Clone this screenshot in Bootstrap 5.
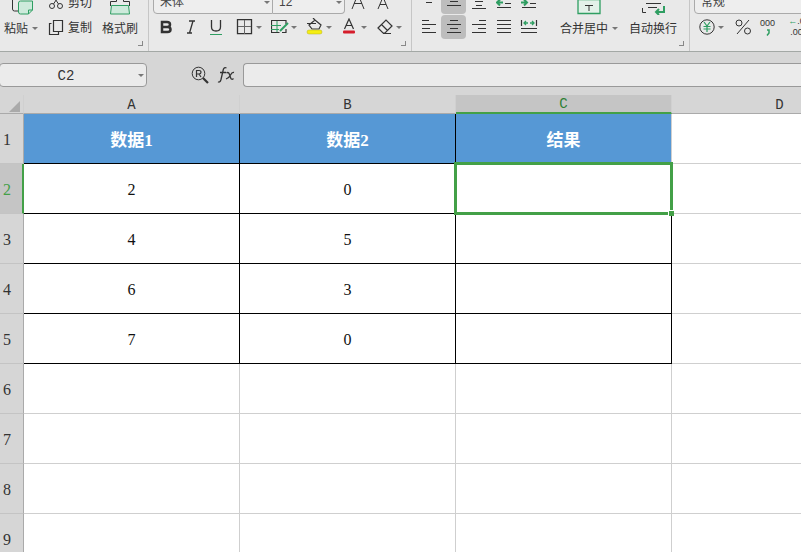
<!DOCTYPE html>
<html lang="zh-CN">
<head>
<meta charset="utf-8">
<meta name="viewport" content="width=device-width, initial-scale=1">
<title>Spreadsheet</title>
<link href="https://cdn.jsdelivr.net/npm/bootstrap@5.3.0/dist/css/bootstrap.min.css" rel="stylesheet">
<style>
  body { background: #fff; color: #333; font-family: "Liberation Sans", "Noto Sans CJK SC", sans-serif; font-size: 12px; line-height: 16px; }
  svg { display: block; flex: none; fill: none; stroke: #333; }
  .app { height: 100vh; }
  .ribbon { height: 51px; background: #e9e9e9; }
  .tool-group { border-right: 1px solid #c6c6c6; position: relative; padding-bottom: 12px; }
  .tool-group:last-child { border-right: 0; }
  .tool { border: 0; background: none; padding: 0; height: 24px; color: #333; font-size: 12px; line-height: 24px; display: flex; align-items: center; justify-content: center; white-space: nowrap; }
  .w25 { width: 25px; }
  .split { width: 35px; justify-content: flex-start; gap: 2px; }
  .stack { display: flex; flex-direction: column; align-items: center; }
  .stack .tool { height: auto; flex-direction: column; }
  .caption { height: 24px; display: flex; align-items: center; gap: 4px; padding-top: 3px; }
  .picture { height: 24px; display: flex; align-items: center; }
  .row-gap { gap: 1px; }
  .clipboard { gap: 10px; padding-right: 10px; }
  .clipboard .gap-1 { padding-top: 2px; }
  .wrap-tools { gap: 11px; }
  .caret { width: 0; height: 0; border: 3px solid transparent; border-top-color: #777; border-bottom: 0; flex: none; }
  .pressed { background: #bdbdbd; border-radius: 4px; }
  .corner { position: absolute; right: 5px; bottom: 5px; width: 5px; height: 5px; border: solid #888; border-width: 0 1px 1px 0; }
  .pick { appearance: none; border: 1px solid #aaa; background: #eee; height: 24px; color: #444; font-size: 12px; padding: 0 6px; }
  .pick-wrap { position: relative; }
  .pick-wrap .caret { position: absolute; right: 3px; top: 11px; }
  .font-pick { width: 120px; border-radius: 4px 0 0 4px; }
  .size-pick { width: 72px; border-left: 0; border-radius: 0 4px 4px 0; }
  .number-pick { width: 140px; border-radius: 4px; }
  .slim { width: 32px; }
  .digits { flex-direction: column; font: 9px/11px "Liberation Sans", sans-serif; }
  .digits .go { color: #2f9e62; font-weight: bold; }
  .formula-bar { height: 44px; background: #d6d6d6; border-top: 1px solid #a3a8a5; padding-top: 11px; }
  .finder { margin-left: 44px; }
  .field { height: 24px; border: 1px solid #999; background: #ebebeb; border-radius: 4px; font: 14px "Liberation Mono", monospace; color: #333; outline: 0; }
  .name-box { width: 148px; margin-left: -1px; text-align: center; padding: 1px 14px 0 0; }
  .sheet { table-layout: fixed; width: 888px; border-collapse: separate; border-spacing: 0; }
  .sheet th, .sheet td { padding: 0; text-align: center; vertical-align: middle; border: solid #cfcfcf; border-width: 0 1px 1px 0; }
  .sheet td, .sheet tbody th { height: 50px; padding-top: 2px; }
  .sheet td { color: #111; font: 16px "Liberation Serif", "Noto Sans CJK SC", serif; }
  .sheet thead th { height: 19px; background: #d6d6d6; border-color: #d0d0d0; border-bottom-color: #aaa; font: 14px/16px "Liberation Mono", monospace; color: #333; padding-top: 2px; }
  .sheet tbody th { background: #d6d6d6; border-color: #aaa; border-bottom-color: #c4c4c4; padding-right: 9px; font: 16px "Liberation Serif", serif; color: #333; }
  .sheet thead .active { background: #c5c5c5; color: #2f8035; border-bottom: 2px solid #43a047; line-height: 15px; }
  .sheet tbody .active { background: #c5c5c5; color: #43a047; border-right: 2px solid #43a047; padding-right: 8px; }
  .sheet .boxed { border-color: #000; }
  .sheet .title { background: #5698d5; color: #fff; font: bold 17px "Liberation Serif", "Noto Sans CJK SC", sans-serif; padding-top: 0; }
  .sheet .edge { border-right-color: #cfcfcf; }
  .selected { position: relative; }
  .selection { position: absolute; inset: -2px; border: 3px solid #43a047; z-index: 1; }
  .selection::after { content: ""; position: absolute; right: -4px; bottom: -4px; width: 6px; height: 6px; background: #43a047; border: solid #fff; border-width: 1px 0 0 1px; }
  .g { stroke: #2f9e62; }
</style>
</head>
<body>
<div class="app d-flex flex-column overflow-hidden">
  <header class="ribbon d-flex overflow-hidden flex-shrink-0">
    <div class="tool-group clipboard d-flex align-items-end flex-shrink-0 ps-1">
      <div class="stack">
        <button class="tool" type="button" aria-label="粘贴">
          <span class="picture"><svg width="26" height="24" viewBox="0 0 26 24"><path d="M4.500 0v18q0 2 2 2h4M19.500 0v9"/><path class="g" fill="#cdeadb" d="M10.500 12q0-2 2-2h12v9l-4 4h-8q-2 0-2-2z"/><path class="g" d="M20.500 23v-4h4"/></svg></span>
          <span class="caption">粘贴<i class="caret"></i></span>
        </button>
      </div>
      <div class="d-flex flex-column row-gap">
        <button class="tool gap-1" type="button"><svg width="16" height="16" viewBox="0 0 16 16"><circle cx="4" cy="11" r="2.500"/><circle cx="12" cy="11" r="2.500"/><path d="m5.500 9 6-9M10.500 9l-6-9"/></svg>剪切</button>
        <button class="tool gap-1" type="button"><svg width="16" height="16" viewBox="0 0 16 16"><path stroke-width="1.200" d="M5.500.5h9v11h-9zM3.500 3.500h-2v11h9V12"/></svg>复制</button>
      </div>
      <button class="tool stack h-auto" type="button">
        <span class="picture"><svg width="24" height="24" viewBox="0 0 24 24"><path d="M8.500 0v10.500h-6V15M15.500 0v10.500h6V15"/><path class="g" fill="#cdeadb" d="M3.500 14.500h17l1 8.500h-19z"/></svg></span>
        <span class="caption">格式刷</span>
      </button>
      <span class="corner"></span>
    </div>

    <div class="tool-group d-flex flex-column justify-content-end row-gap flex-shrink-0 ps-1">
      <div class="d-flex">
        <span class="pick-wrap"><select class="pick font-pick" aria-label="字体"><option>宋体</option></select><i class="caret"></i></span>
        <span class="pick-wrap"><select class="pick size-pick" aria-label="字号"><option>12</option></select><i class="caret"></i></span>
        <button class="tool w25" type="button" aria-label="增大字号"><svg width="14" height="16" viewBox="0 0 14 16"><path d="m1 15 6-15 6 15M3 9.500h8"/></svg></button>
        <button class="tool w25" type="button" aria-label="减小字号"><svg width="12" height="14" viewBox="0 0 12 14"><path d="m1 14 5-12 5 12M3 9.500h6"/></svg></button>
      </div>
      <div class="d-flex">
        <button class="tool w25" type="button" aria-label="加粗"><svg width="12" height="14" viewBox="0 0 12 14"><path stroke-width="2.500" d="M2 2h5q3 0 3 2.500T7 7H2zM2 7h5.500q3 0 3 2.500t-3 2.500H2z"/></svg></button>
        <button class="tool w25" type="button" aria-label="倾斜"><svg width="12" height="14" viewBox="0 0 12 14"><path stroke-width="1.300" d="M4 1h6M2 13h5M8 1 4.500 13"/></svg></button>
        <button class="tool w25" type="button" aria-label="下划线"><svg width="14" height="16" viewBox="0 0 14 16"><path stroke-width="1.300" d="M2.500 1v7q0 4 4.500 4t4.500-4V1"/><path class="g" d="M1 15.500h12"/></svg></button>
        <button class="tool split ms-2" type="button" aria-label="边框"><svg width="18" height="16" viewBox="0 0 18 16"><path stroke-width="1.300" d="M1.500.7h14v14h-14z"/><path stroke="#666" d="M8.500 1v14M2 7.500h13"/></svg><i class="caret"></i></button>
        <button class="tool split" type="button" aria-label="单元格样式"><svg width="18" height="16" viewBox="0 0 18 16"><path stroke-width="1.200" d="M15 5V1.500H.5v12h8M11 13.500h4V10"/><path class="g" d="M0 6.500h10M6 2v11M0 10.500h8"/><path class="g" stroke-width="2" d="m9 12 8-8"/></svg><i class="caret"></i></button>
        <button class="tool split" type="button" aria-label="填充颜色"><svg width="18" height="18" viewBox="0 0 18 18"><path stroke-width="1.200" d="m3 7 6-5 6 5-2 4H6zM1 5.500h9M9 2 7 0"/><rect x="1" y="12" width="15" height="4" rx="2" fill="#f5ee12" stroke="#b7b31c" stroke-width=".5"/></svg><i class="caret"></i></button>
        <button class="tool split" type="button" aria-label="字体颜色"><svg width="18" height="18" viewBox="0 0 18 18"><path stroke-width="1.200" d="m3.500 11 4.500-10 4.500 10M5 7.500h6"/><rect x="2" y="12.500" width="12" height="3" rx="1" fill="#d51d2b" stroke="none"/></svg><i class="caret"></i></button>
        <button class="tool split" type="button" aria-label="清除"><svg width="18" height="16" viewBox="0 0 18 16"><path stroke-width="1.200" d="M2 9 10 1l6 6-7 7H7zM5.500 5.500l6 6M7 14.500h8"/></svg><i class="caret"></i></button>
      </div>
      <span class="corner"></span>
    </div>

    <div class="tool-group wrap-tools d-flex align-items-end flex-shrink-0 ps-1 pe-2">
      <div class="d-flex flex-column row-gap me-2">
        <div class="d-flex">
          <button class="tool w25" type="button" aria-label="顶端对齐"><svg width="16" height="16" viewBox="0 0 16 16"><path stroke-width="1.200" d="M1 .5h14M3 4.500h10M5 8.500h6"/></svg></button>
          <button class="tool w25 pressed" type="button" aria-label="垂直居中"><svg width="16" height="16" viewBox="0 0 16 16"><path d="M4 7.500h8M1 11.500h14M4 3.500h8" stroke-width="1.200"/></svg></button>
          <button class="tool w25" type="button" aria-label="底端对齐"><svg width="16" height="16" viewBox="0 0 16 16"><path stroke-width="1.200" d="M4 7.500h8M5 11.500h6M1 14.500h14"/></svg></button>
          <button class="tool w25" type="button" aria-label="减少缩进"><svg width="16" height="16" viewBox="0 0 16 16"><path stroke-width="1.200" d="M9 9.500h6M1 13.500h14"/><path class="g" stroke-width="2" d="M7 8.500H1m3-3-3 3 3 3"/></svg></button>
          <button class="tool w25" type="button" aria-label="增加缩进"><svg width="16" height="16" viewBox="0 0 16 16"><path stroke-width="1.200" d="M9 9.500h6M1 13.500h14"/><path class="g" stroke-width="2" d="M0 8.500h6m-3-3 3 3-3 3"/></svg></button>
        </div>
        <div class="d-flex">
          <button class="tool w25" type="button" aria-label="左对齐"><svg width="16" height="16" viewBox="0 0 16 16"><path stroke-width="1.200" d="M1 1.500h7M1 5.500h14M1 9.500h8M1 13.500h14"/></svg></button>
          <button class="tool w25 pressed" type="button" aria-label="居中"><svg width="16" height="16" viewBox="0 0 16 16"><path stroke-width="1.200" d="M4 1.500h8M1 5.500h14M4 9.500h8M1 13.500h14"/></svg></button>
          <button class="tool w25" type="button" aria-label="右对齐"><svg width="16" height="16" viewBox="0 0 16 16"><path stroke-width="1.200" d="M8 1.500h7M1 5.500h14M7 9.500h8M1 13.500h14"/></svg></button>
          <button class="tool w25" type="button" aria-label="两端对齐"><svg width="16" height="16" viewBox="0 0 16 16"><path stroke-width="1.200" d="M1 1.500h14M1 5.500h14M1 9.500h14M1 13.500h14"/></svg></button>
          <button class="tool w25" type="button" aria-label="分散对齐"><svg width="18" height="16" viewBox="0 0 18 16"><path stroke-width="1.200" d="M1.500 1v6M16.500 1v6M1 9.500h16M1 13.500h16"/><path class="g" stroke-width="1.300" d="M8 4H4m2-2L4 4l2 2M10 4h4m-2-2 2 2-2 2"/></svg></button>
        </div>
      </div>
      <button class="tool stack h-auto" type="button">
        <span class="picture"><svg width="24" height="24" viewBox="0 0 24 24"><path class="g" fill="#e3f1e9" stroke-width="1.300" d="M1 8.500h22v14H1z"/><path d="M8 14.500h8M12 14.500V20"/></svg></span>
        <span class="caption">合并居中<i class="caret"></i></span>
      </button>
      <button class="tool stack h-auto me-1" type="button">
        <span class="picture"><svg width="24" height="24" viewBox="0 0 24 24"><path d="M5 12.500h15M7 16.500h9M1.500 17v4.500H5"/><path class="g" stroke-width="2" d="M23 15v6h-8m3-3-3 3 3 3"/></svg></span>
        <span class="caption">自动换行</span>
      </button>
      <span class="corner"></span>
    </div>

    <div class="tool-group d-flex flex-column justify-content-end row-gap flex-shrink-0 ps-1">
      <span class="pick-wrap"><select class="pick number-pick" aria-label="数字格式"><option>常规</option></select></span>
      <div class="d-flex">
        <button class="tool split slim ms-1" type="button" aria-label="货币"><svg width="18" height="18" viewBox="0 0 18 18"><circle cx="9" cy="9" r="7.200"/><path class="g" stroke-width="1.200" d="m6 4 3 4 3-4M9 8v6M5.500 8.500h7M5.500 11h7"/></svg><i class="caret"></i></button>
        <button class="tool w25" type="button" aria-label="百分比"><svg width="18" height="18" viewBox="0 0 18 18"><circle cx="5" cy="5" r="3"/><circle cx="13.500" cy="13" r="3"/><path d="M15 2 3 16"/></svg></button>
        <button class="tool w25 digits" type="button" aria-label="千位分隔"><span>000</span><svg width="6" height="8" viewBox="0 0 6 8"><path class="g" stroke-width="1.500" d="M2 1h2v3L2 6.500"/></svg></button>
        <button class="tool w25 digits ms-1" type="button" aria-label="增加小数位"><span><span class="go">←</span>.0</span><span>.00</span></button>
      </div>
    </div>
  </header>

  <div class="formula-bar d-flex align-items-start flex-shrink-0">
    <span class="pick-wrap"><input class="field name-box" aria-label="名称框" value="C2"><i class="caret"></i></span>
    <button class="tool finder" type="button" aria-label="查找"><svg width="18" height="18" viewBox="0 0 18 18"><circle cx="7.500" cy="7.500" r="6.300"/><path stroke-width="1.200" d="M5.500 11V4.500H8q2 0 2 1.700T8 8H5.500M8 8l2 3"/><path stroke-width="2.200" d="m12 12 5 5"/></svg></button>
    <button class="tool ms-2" type="button" aria-label="插入函数"><svg width="18" height="18" viewBox="0 0 18 18"><path stroke-width="1.300" d="M9.500 2Q7 .8 6.200 4L4 13.500Q3 17 1 15.800M3 6.500h6M9.500 7q2-1.500 3 1.500l1 3q1 3 3 1M17 6.500q-2-.5-3.500 2.500T9 13"/></svg></button>
    <input class="field flex-grow-1 ms-2 rounded-end-0 border-end-0" aria-label="编辑栏">
  </div>

  <main class="flex-grow-1 overflow-hidden">
    <table class="sheet">
      <colgroup><col style="width:24px"><col><col><col><col></colgroup>
      <thead><tr><th aria-label="全选"><svg width="22" height="16" viewBox="0 0 22 16"><path fill="#aaa" stroke="none" d="M20 4v11H9z"/></svg></th><th scope="col">A</th><th scope="col">B</th><th scope="col" class="active">C</th><th scope="col">D</th></tr></thead>
      <tbody>
        <tr><th scope="row">1</th><td class="boxed title">数据1</td><td class="boxed title">数据2</td><td class="boxed title edge">结果</td><td></td></tr>
        <tr><th scope="row" class="active">2</th><td class="boxed">2</td><td class="boxed">0</td><td class="boxed selected"><div class="selection"></div></td><td></td></tr>
        <tr><th scope="row">3</th><td class="boxed">4</td><td class="boxed">5</td><td class="boxed"></td><td></td></tr>
        <tr><th scope="row">4</th><td class="boxed">6</td><td class="boxed">3</td><td class="boxed"></td><td></td></tr>
        <tr><th scope="row">5</th><td class="boxed">7</td><td class="boxed">0</td><td class="boxed"></td><td></td></tr>
        <tr><th scope="row">6</th><td></td><td></td><td></td><td></td></tr>
        <tr><th scope="row">7</th><td></td><td></td><td></td><td></td></tr>
        <tr><th scope="row">8</th><td></td><td></td><td></td><td></td></tr>
        <tr><th scope="row">9</th><td></td><td></td><td></td><td></td></tr>
      </tbody>
    </table>
  </main>
</div>
<script src="https://cdn.jsdelivr.net/npm/bootstrap@5.3.0/dist/js/bootstrap.bundle.min.js"></script>
</body>
</html>
